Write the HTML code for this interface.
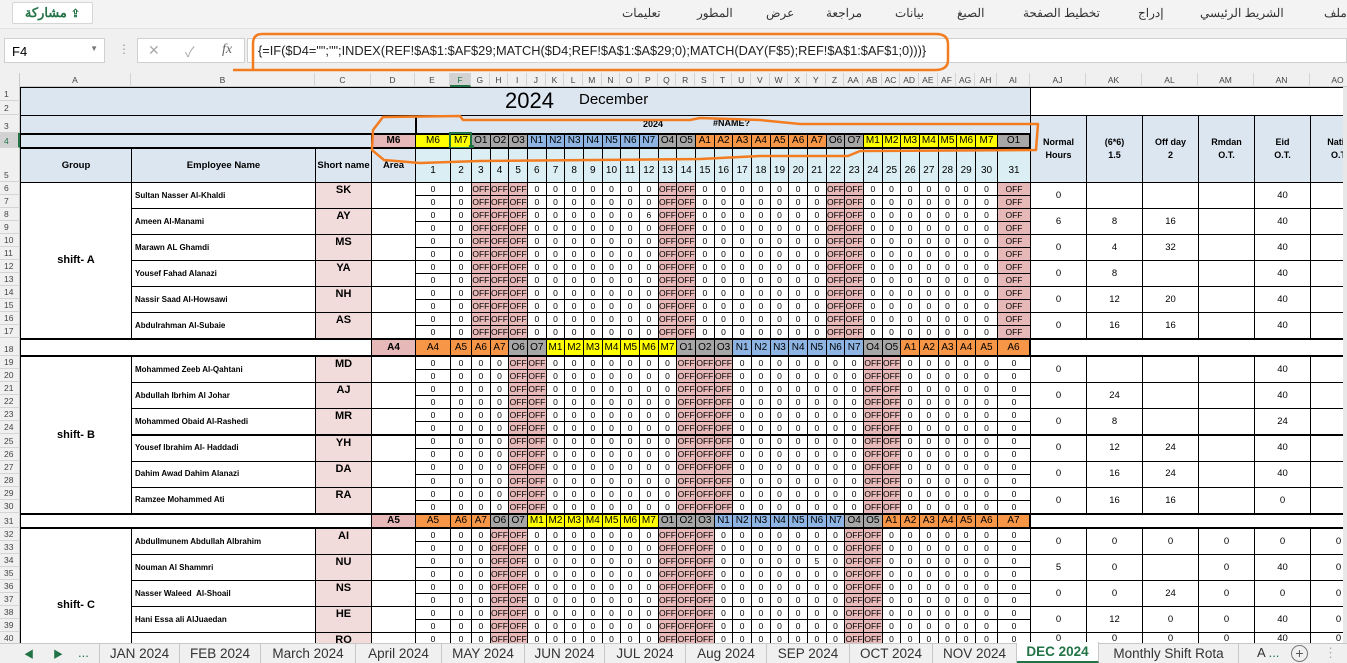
<!DOCTYPE html>
<html><head><meta charset="utf-8">
<style>
*{margin:0;padding:0;box-sizing:border-box}
body{width:1347px;height:663px;overflow:hidden;position:relative;background:#f3f3f3;font-family:"Liberation Sans","Noto Sans CJK SC",sans-serif;color:#000}
.a{position:absolute}
.c{position:absolute;border:1px solid #000;display:flex;align-items:center;justify-content:center;text-align:center;white-space:nowrap;overflow:hidden;font-size:8px;line-height:1}
#grid{position:absolute;left:0;top:0;width:1347px;height:645px;overflow:hidden}
.mn{position:absolute;top:6px;font-size:12px;color:#333;font-family:"Liberation Sans","Noto Sans CJK SC",sans-serif}
.tab{position:absolute;top:643px;height:20px;font-size:13.5px;color:#333;display:flex;align-items:center;justify-content:center;border-right:1px solid #c8c8c8}
</style></head><body>
<div class="a" style="left:0;top:0;width:1347px;height:29px;background:#f3f3f3;border-bottom:1px solid #e1e1e1"></div>
<div class="a" style="left:12px;top:2px;width:81px;height:22px;background:#fff;border:1px solid #d6d6d6;border-radius:2px;color:#217346;font-weight:bold;font-size:13px;display:flex;align-items:center;justify-content:center;gap:4px"><span>مشاركة</span><span style="font-size:11px">⇪</span></div>
<div class="mn" style="left:622px">تعليمات</div>
<div class="mn" style="left:697px">المطور</div>
<div class="mn" style="left:766px">عرض</div>
<div class="mn" style="left:826px">مراجعة</div>
<div class="mn" style="left:895px">بيانات</div>
<div class="mn" style="left:957px">الصيغ</div>
<div class="mn" style="left:1023px">تخطيط الصفحة</div>
<div class="mn" style="left:1138px">إدراج</div>
<div class="mn" style="left:1200px">الشريط الرئيسي</div>
<div class="mn" style="left:1324px">ملف</div>
<div class="a" style="left:0;top:29px;width:1347px;height:44px;background:#f0f0f0"></div>
<div class="a" style="left:4px;top:38px;width:101px;height:25px;background:#fff;border:1px solid #d0d0d0;font-size:13px;padding:5px 0 0 7px">F4<span style="position:absolute;right:6px;top:5px;font-size:8px;color:#777">▼</span></div>
<div class="a" style="left:118px;top:42px;font-size:12px;color:#999">⋮</div>
<div class="a" style="left:137px;top:38px;width:108px;height:25px;background:#fff;border:1px solid #d0d0d0;font-size:14px;color:#aaa"><span style="position:absolute;left:10px;top:3px">✕</span><span style="position:absolute;left:47px;top:3px">✓</span><span style="position:absolute;left:84px;top:3px;color:#666;font-style:italic;font-family:'Liberation Serif',serif">fx</span></div>
<div class="a" style="left:247px;top:38px;width:1100px;height:25px;background:#fff;border:1px solid #d0d0d0;font-size:12.8px;padding:4px 0 0 10px;color:#222">{=IF($D4="";"";INDEX(REF!$A$1:$AF$29;MATCH($D4;REF!$A$1:$A$29;0);MATCH(DAY(F$5);REF!$A$1:$AF$1;0)))}</div>
<div id="grid"></div>
<div class="a" style="left:0;top:643px;width:1347px;height:20px;background:#f0f0f0;border-top:1px solid #c8c8c8"></div>
<div class="a" style="left:24px;top:646px;font-size:10px;color:#217346">◀</div>
<div class="a" style="left:53px;top:646px;font-size:10px;color:#217346">▶</div>
<div class="a" style="left:78px;top:645px;font-size:13px;color:#217346">...</div>
<div id="tabs"></div>
<div class="a" style="left:1257px;top:645px;font-size:13px;color:#333">A <span style="color:#217346">...</span></div>
<div class="a" style="left:1291px;top:645px;width:17px;height:17px;border:1px solid #777;border-radius:50%;font-size:14px;line-height:14px;text-align:center;color:#555">+</div>
<div class="a" style="left:1324px;top:645px;font-size:13px;color:#aaa">⋮</div>
<svg class="a" style="left:0;top:0" width="1347" height="663" viewBox="0 0 1347 663">
<g fill="none" stroke="#f47c20" stroke-width="2.5" stroke-linejoin="round">
<path d="M233 70 L935 70 Q948 70 948 60 L948 44 Q948 34 936 34 L262 34 Q253 34 253 44 L253 70"/>
<path d="M383 117 L460 116 L463 120 L690 120 L700 118 L760 120 L800 124 L1038 124 L1036 150 L860 151 L848 156 L760 156 L700 159 L480 161 L420 163 L384 160 L372 150 L373 130 Z"/>
</g>
</svg>
<script>
const G=document.getElementById('grid');
function d(x,y,w,h,css,t){const e=document.createElement('div');e.className='a';e.style.cssText=`left:${x}px;top:${y}px;width:${w}px;height:${h}px;`+css;if(t!==undefined)e.innerHTML=t;G.appendChild(e);return e}
const C=[20,131,315,371,415,450,471];for(let i=1;i<=27;i++)C.push(471+i*504/27);
C.push(997,1030,1086,1142,1198,1254,1310,1366);
const R=[];R[1]=87;R[2]=101;R[3]=115;R[4]=133;R[5]=148;
for(let r=6;r<=17;r++)R[r]=182+13*(r-6);R[18]=338;
for(let r=19;r<=30;r++)R[r]=356+157/12*(r-19);R[31]=513;
for(let r=32;r<=41;r++)R[r]=528+13*(r-32);
d(0,73,1347,14,'background:#f0f0f0;border-bottom:1px solid #c8c8c8');
d(0,73,20,14,'background:#f0f0f0;border-right:1px solid #c8c8c8');
const L=['A','B','C','D','E','F','G','H','I','J','K','L','M','N','O','P','Q','R','S','T','U','V','W','X','Y','Z','AA','AB','AC','AD','AE','AF','AG','AH','AI','AJ','AK','AL','AM','AN','AO'];
for(let i=0;i<41;i++){d(C[i],73,C[i+1]-C[i],14,'border-right:1px solid #d4d4d4;font-size:8.5px;color:#444;text-align:center;line-height:14px'+(i==5?';background:#d2d2d2;border-bottom:2px solid #217346;color:#217346':''),L[i]);}
d(0,87,20,560,'background:#f0f0f0;border-right:1px solid #c8c8c8');
for(let r=1;r<=40;r++){d(0,R[r],20,R[r+1]-R[r],'border-bottom:1px solid #d4d4d4;font-size:8.5px;color:#444;padding-left:4px;display:flex;align-items:flex-end;padding-bottom:1px'+(r==4?';background:#d2d2d2;color:#217346;border-right:2px solid #217346':''),r)}
d(20,87,1327,560,'background:#fff');
function box(c1,c2,r1,r2,t,css){const x=C[c1],y=R[r1];const e=document.createElement('div');e.className='c';e.style.cssText=`left:${x}px;top:${y}px;width:${C[c2+1]-x+1}px;height:${R[r2+1]-y+1}px;`+(css||'');if(t!==undefined)e.innerHTML=t;G.appendChild(e);return e}
const LB='#dce6f1';
box(0,34,1,2,'','background:'+LB);
d(505,88,60,26,'font-size:22px','2024');d(579,91,100,20,'font-size:15px','December');
box(0,3,3,3,'','background:'+LB);box(4,34,3,3,'','background:'+LB+';border-left:2px solid #000');
d(643,119,40,10,'font-size:9px;font-weight:bold','2024');d(713,118,60,10,'font-size:9px;font-weight:bold','#NAME?');
box(35,40,1,2,'','background:#fff');
const hdr=['Normal<br>Hours','(6*6)<br>1.5','Off day<br>2','Rmdan<br>O.T.','Eid<br>O.T.','Natio<br>O.T'];
for(let i=0;i<6;i++)box(35+i,35+i,3,5,hdr[i],'background:'+LB+';font-weight:bold;font-size:9px;line-height:1.4;white-space:normal');
function code(c){return {O:'#a6a6a6',N:'#8db4e2',A:'#f79646',M:'#ffff00'}[c[0]]}
function band(r,dv,codes){
 box(0,2,r,r,'','background:'+(r==4?LB:'#fff')+';border-top:2px solid #000;border-bottom:2px solid #000');
 box(3,3,r,r,dv,'background:#e6b8b7;font-weight:bold;font-size:10px;border-top:2px solid #000;border-bottom:2px solid #000');
 codes.forEach((k,i)=>box(4+i,4+i,r,r,k,'background:'+code(k)+';font-size:10px;border-top:2px solid #000;border-bottom:2px solid #000'+(i==30?';border-right:2px solid #000':'')));
 if(r!=4)box(35,40,r,r,'','background:#fff;border-top:2px solid #000;border-bottom:2px solid #000');
}
const s=(p,a,b)=>{const o=[];for(let i=a;i<=b;i++)o.push(p+i);return o};
const c4=['M6','M7','O1','O2','O3',...s('N',1,7),'O4','O5',...s('A',1,7),'O6','O7',...s('M',1,7),'O1'];
const c18=['A4','A5','A6','A7','O6','O7',...s('M',1,7),'O1','O2','O3',...s('N',1,7),'O4','O5',...s('A',1,6)];
const c31=['A5','A6','A7','O6','O7',...s('M',1,7),'O1','O2','O3',...s('N',1,7),'O4','O5',...s('A',1,7)];
band(4,'M6',c4);band(18,'A4',c18);band(31,'A5',c31);
d(C[5]-1,R[4]-1,C[6]-C[5]+2,R[5]-R[4]+2,'border:2px solid #217346');d(C[6]-2,R[5]-3,5,5,'background:#217346');
const h5=['Group','Employee Name','Short name','Area'];
for(let i=0;i<4;i++)box(i,i,5,5,h5[i],'background:'+LB+';font-weight:bold;font-size:9.5px');
for(let i=0;i<31;i++)box(4+i,4+i,5,5,i+1,'background:#daeef3;font-size:10px;align-items:flex-end;padding-bottom:6px');
function group(r0,n,label,codes,names,shorts,right,sp){
 const last=r0+2*n-1;
 box(0,0,r0,Math.min(last,40),label,'font-weight:bold;font-size:11px;'+(sp||''));
 for(let k=0;k<n;k++){const r=r0+2*k;if(r>40)break;const r2=Math.min(r+1,40);
  box(1,1,r,r2,names[k],'justify-content:flex-start;padding-left:3px;font-weight:bold;font-size:8px');
  box(2,2,r,r2,shorts[k],'background:#f2dcdb;font-weight:bold;font-size:11px;align-items:flex-start;padding-top:2px');
  box(3,3,r,r2,'');
  if(right[k])right[k].forEach((v,j)=>box(35+j,35+j,r,r2,v,'font-size:9.5px'));
  for(let rr=r;rr<=r2;rr++)codes.forEach((cd,i)=>{const off=cd[0]=='O';let v=off?'OFF':'0';if(rr==8&&i==11)v='6';if(rr==34&&i==20)v='5';box(4+i,4+i,rr,rr,v,off?'background:#e6b8b7;font-size:8.5px':'font-size:8.5px')});
 }
}
group(6,6,'shift- A',c4,['Sultan Nasser Al-Khaldi','Ameen Al-Manami','Marawn AL Ghamdi','Yousef Fahad Alanazi','Nassir Saad Al-Howsawi','Abdulrahman Al-Subaie'],['SK','AY','MS','YA','NH','AS'],
[['0','','','','40',''],['6','8','16','','40',''],['0','4','32','','40',''],['0','8','','','40',''],['0','12','20','','40',''],['0','16','16','','40','']]);
group(19,6,'shift- B',c18,['Mohammed Zeeb Al-Qahtani','Abdullah Ibrhim Al Johar','Mohammed Obaid Al-Rashedi','Yousef Ibrahim Al- Haddadi','Dahim Awad Dahim Alanazi','Ramzee Mohammed Ati'],['MD','AJ','MR','YH','DA','RA'],
[['0','','','','40',''],['0','24','','','40',''],['0','8','','','24',''],['0','12','24','','40',''],['0','16','24','','40',''],['0','16','16','','0','']]);
group(32,5,'shift- C',c31,['Abdullmunem Abdullah Albrahim','Nouman Al Shammri','Nasser Waleed &nbsp;Al-Shoail','Hani Essa ali AlJuaedan',''],['AI','NU','NS','HE','RO'],
[['0','0','0','0','0','0'],['5','0','','0','40','0'],['0','0','24','0','0','0'],['0','12','0','0','40','0'],['0','0','0','0','40','0']],'align-items:flex-start;padding-top:71px');
d(1343,87,4,560,'background:#e8e8e8');
const T=document.getElementById('tabs');
const tabs=[[99,180,'JAN 2024'],[180,261,'FEB 2024'],[261,356,'March 2024'],[356,442,'April 2024'],[442,525,'MAY 2024'],[525,605,'JUN 2024'],[605,686,'JUL 2024'],[686,767,'Aug 2024'],[767,850,'SEP 2024'],[850,933,'OCT 2024'],[933,1017,'NOV 2024'],[1017,1099,'DEC 2024'],[1099,1239,'Monthly Shift Rota']];
tabs.forEach(([a,b,t])=>{const e=document.createElement('div');e.className='tab';e.style.cssText=`left:${a}px;width:${b-a}px;border-left:${a==99?'1px solid #c8c8c8':'0'}`+(t=='DEC 2024'?';background:#fff;color:#217346;font-weight:bold;border-bottom:2px solid #217346;top:642px;height:21px':'');e.textContent=t;T.appendChild(e)});
</script>
</body></html>
